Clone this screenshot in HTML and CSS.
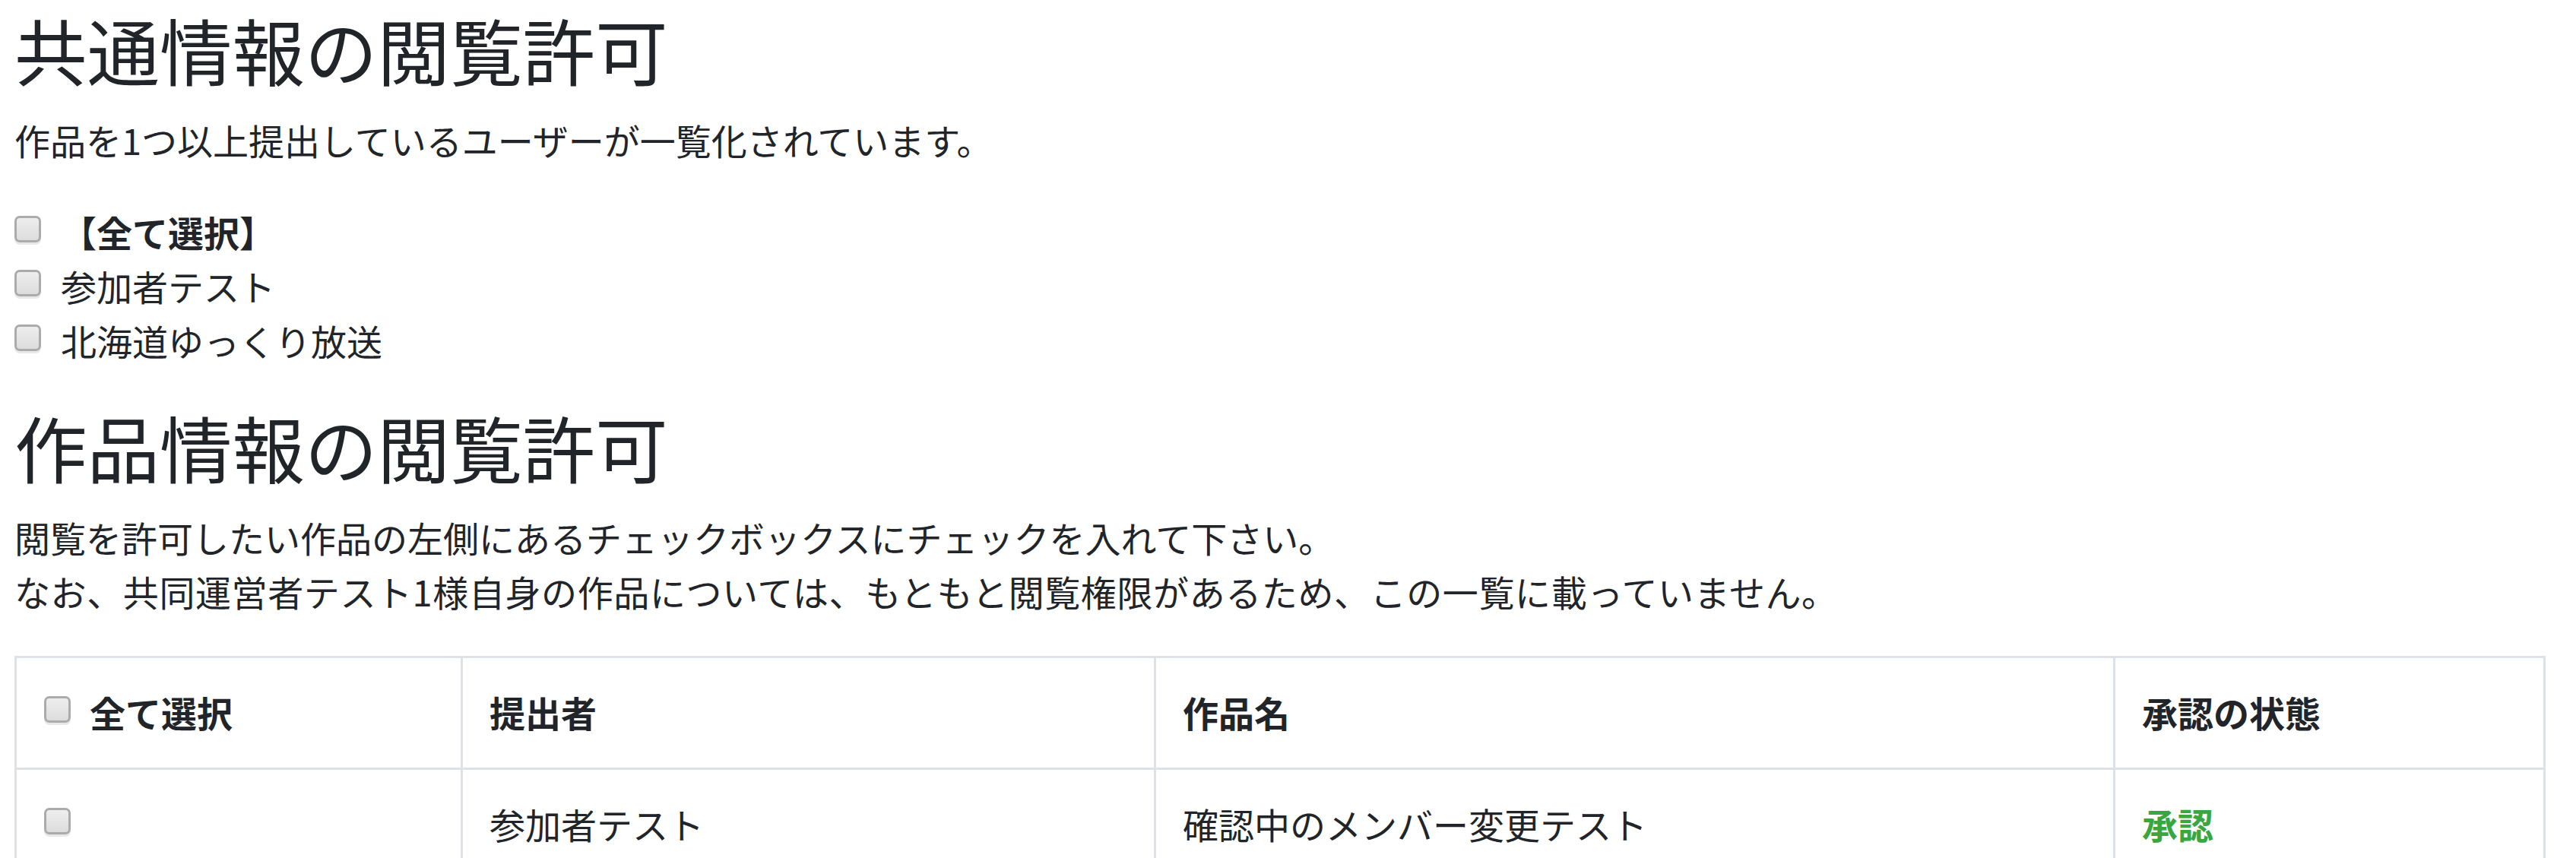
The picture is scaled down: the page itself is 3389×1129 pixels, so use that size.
FILE: index.html
```html
<!DOCTYPE html>
<html lang="ja">
<head>
<meta charset="utf-8">
<title>閲覧許可</title>
<link rel="stylesheet" href="styles.css">
</head>
<body>
<main class="page">
  <h1 class="title">共通情報の閲覧許可</h1>
  <p class="lead">作品を1つ以上提出しているユーザーが一覧化されています。</p>
  <div class="user-list">
    <label class="check-row"><input type="checkbox" class="cb"><strong>【全て選択】</strong></label>
    <label class="check-row"><input type="checkbox" class="cb"><span>参加者テスト</span></label>
    <label class="check-row"><input type="checkbox" class="cb"><span>北海道ゆっくり放送</span></label>
  </div>

  <h1 class="title">作品情報の閲覧許可</h1>
  <p class="lead">閲覧を許可したい作品の左側にあるチェックボックスにチェックを入れて下さい。<br><span class="wide">なお、共同運営者テスト1様自身の作品については、もともと閲覧権限があるため、この一覧に載っていません。</span></p>

  <table class="works">
    <colgroup>
      <col class="c-check">
      <col class="c-user">
      <col class="c-title">
      <col class="c-status">
    </colgroup>
    <thead>
      <tr>
        <th><label class="cell-check"><input type="checkbox" class="cb"><span>全て選択</span></label></th>
        <th>提出者</th>
        <th>作品名</th>
        <th>承認の状態</th>
      </tr>
    </thead>
    <tbody>
      <tr>
        <td><label class="cell-check"><input type="checkbox" class="cb"></label></td>
        <td>参加者テスト</td>
        <td>確認中のメンバー変更テスト</td>
        <td><span class="ok">承認</span></td>
      </tr>
    </tbody>
  </table>
</main>
</body>
</html>
```

FILE: styles.css
```css
html, body {
  margin: 0;
  padding: 0;
  background: #ffffff;
}

body {
  font-family: "Noto Sans CJK JP", "Noto Sans", sans-serif;
  font-size: 47px;
  line-height: 71.5px;
  color: #212529;
}

.page {
  padding: 8px 40px 0 19px;
}

.title {
  margin: 0 0 26px 0;
  font-size: 95.5px;
  line-height: 114px;
  font-weight: 400;
}

.lead {
  margin: 0 0 49px 0;
}

.wide {
  letter-spacing: 0.6px;
}

.user-list {
  margin-bottom: 47.5px;
  display: flex;
  flex-direction: column;
}

.check-row {
  display: flex;
  align-items: flex-start;
  height: 71.5px;
}

.check-row strong {
  font-weight: 700;
}

.cb {
  -webkit-appearance: none;
  appearance: none;
  flex: none;
  width: 35px;
  height: 35px;
  margin: 15px 26px 0 0;
  box-sizing: border-box;
  border: 3px solid #ababab;
  border-radius: 7px;
  background: linear-gradient(#eeeeee, #dcdcdc);
  box-shadow: 0 3px 0 #e8e8e8;
}

.works {
  width: 3330px;
  table-layout: fixed;
  border-collapse: collapse;
  border: 3px solid #dee2e6;
}

.c-check { width: 587px; }
.c-user { width: 912px; }
.c-title { width: 1262px; }
.c-status { width: 566px; }

.works th,
.works td {
  border: 3px solid #dee2e6;
  padding: 35px 35px 35px 35px;
  text-align: left;
  vertical-align: top;
}

.works th {
  font-weight: 700;
  padding-bottom: 37.5px;
}

.cell-check {
  display: flex;
  align-items: flex-start;
  height: 71.5px;
  padding-left: 1px;
}

.cell-check .cb {
  margin-right: 25px;
}

.ok {
  color: #3aa63f;
  font-weight: 700;
}
```
